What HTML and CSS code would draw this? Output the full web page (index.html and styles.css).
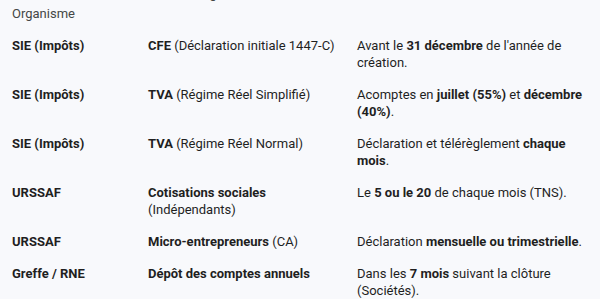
FILE: index.html
```html
<!DOCTYPE html>
<html lang="fr">
<head>
<meta charset="utf-8">
<title>Échéances</title>
<link rel="stylesheet" href="styles.css">
</head>
<body>
<p class="intro">Le tableau ci-dessous liste les obligations</p>
<table class="deadlines">
  <colgroup>
    <col class="c1"><col class="c2"><col class="c3">
  </colgroup>
  <thead>
    <tr><th>Organisme</th><th></th><th></th></tr>
  </thead>
  <tbody>
    <tr>
      <td><b>SIE (Impôts)</b></td>
      <td><b>CFE</b> (Déclaration initiale 1447-C)</td>
      <td>Avant le <b>31 décembre</b> de l'année de création.</td>
    </tr>
    <tr>
      <td><b>SIE (Impôts)</b></td>
      <td><b>TVA</b> (Régime Réel Simplifié)</td>
      <td>Acomptes en <b>juillet (55%)</b> et <b>décembre (40%)</b>.</td>
    </tr>
    <tr>
      <td><b>SIE (Impôts)</b></td>
      <td><b>TVA</b> (Régime Réel Normal)</td>
      <td>Déclaration et télérèglement <b>chaque mois</b>.</td>
    </tr>
    <tr>
      <td><b>URSSAF</b></td>
      <td><b>Cotisations sociales</b> (Indépendants)</td>
      <td>Le <b>5 ou le 20</b> de chaque mois (TNS).</td>
    </tr>
    <tr>
      <td><b>URSSAF</b></td>
      <td><b>Micro-entrepreneurs</b> (CA)</td>
      <td>Déclaration <b>mensuelle ou trimestrielle</b>.</td>
    </tr>
    <tr>
      <td><b>Greffe / RNE</b></td>
      <td><b>Dépôt des comptes annuels</b></td>
      <td>Dans les <b>7 mois</b> suivant la clôture (Sociétés).</td>
    </tr>
  </tbody>
</table>
</body>
</html>
```
FILE: styles.css
```css
html, body {
  margin: 0;
  padding: 0;
  background: #f8f9fc;
  overflow: hidden;
}
body {
  font-family: Roboto, "Noto Sans", "Liberation Sans", sans-serif;
  font-size: 13px;
  line-height: 17px;
  color: #1f1f1f;
}
.intro {
  margin: -15px 0 0 12px;
  color: #444746;
}
.deadlines {
  width: 600px;
  table-layout: fixed;
  border-collapse: collapse;
}
.deadlines .c1 { width: 136px; }
.deadlines .c2 { width: 209px; }
.deadlines .c3 { width: 255px; }
.deadlines th {
  text-align: left;
  font-weight: 400;
  color: #444746;
  padding: 3px 6px 8px 12px;
  vertical-align: top;
}
.deadlines td {
  padding: 7px 6px 7px 12px;
  vertical-align: top;
  border-bottom: 1px solid #f8f9fc;
}
.deadlines td:last-child {
  padding-right: 8px;
}
.deadlines b {
  font-weight: 700;
}
```
